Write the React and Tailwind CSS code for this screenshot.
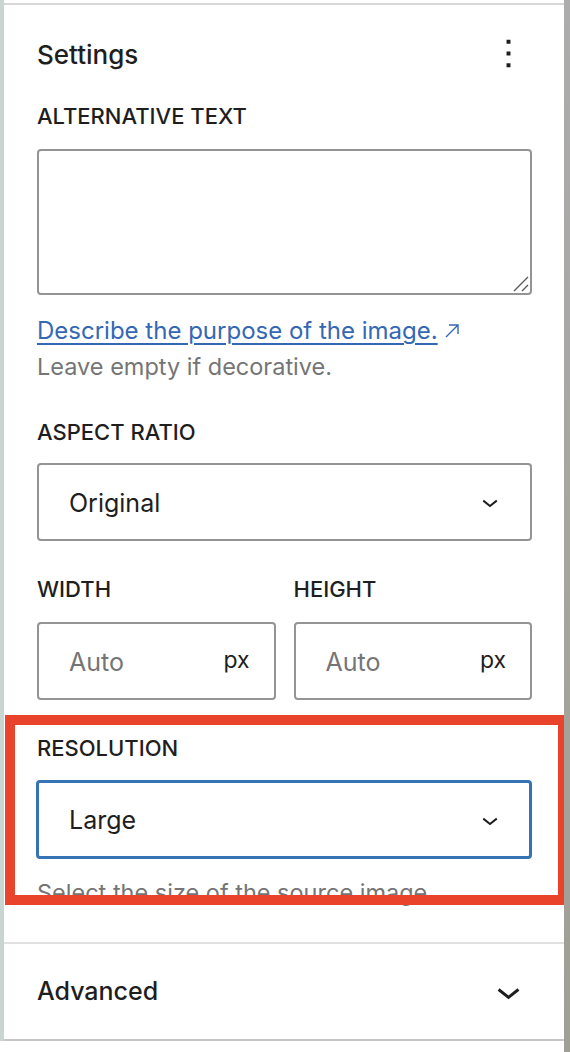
import React from 'react'

// Block settings sidebar: image alt text, aspect ratio, size and resolution controls

const ChevronDown = ({ className }) => (
  <svg viewBox="0 0 24 24" className={className} fill="currentColor">
    <path d="M17.5 11.6L12 16l-5.5-4.4.9-1.2L12 14l4.6-3.6 1 1.2z" />
  </svg>
)

const MoreVertical = ({ className }) => (
  <svg viewBox="0 0 24 24" className={className} fill="currentColor">
    <path d="M13 19h-2v-2h2v2zm0-6h-2v-2h2v2zm0-6h-2V5h2v2z" />
  </svg>
)

const External = ({ className }) => (
  <svg viewBox="0 0 16 16" className={className} fill="none" stroke="currentColor" strokeWidth="1.4">
    <path d="M2 14L14 2M5 2h9v9" />
  </svg>
)

const Label = ({ children }) => (
  <div className="h-[26px] flex items-center text-[22px] leading-none font-medium uppercase text-[#1e1e1e]">
    {children}
  </div>
)

const SelectBox = ({ value, focused }) => (
  <div
    className={
      focused
        ? 'h-[79px] rounded-[4px] border-[3px] border-[#3673b5] flex items-center justify-between pl-[30px] pr-[23px]'
        : 'h-[78px] rounded-[4px] border-2 border-[#949494] flex items-center justify-between pl-[30px] pr-[24px]'
    }
  >
    <span className="text-[25px] text-[#1e1e1e] pt-[3px]">{value}</span>
    <ChevronDown className="w-[32px] h-[32px] text-[#1e1e1e]" />
  </div>
)

const UnitInput = () => (
  <div className="h-[78px] rounded-[4px] border-2 border-[#949494] flex items-center justify-between pl-[30px] pr-[24px]">
    <span className="text-[25px] text-[#757575] pt-[3px]">Auto</span>
    <span className="text-[23px] text-[#1e1e1e] -mt-[2px]">px</span>
  </div>
)

export default function App() {
  return (
    <div className="relative w-[570px] h-[1052px] bg-white flex font-['Inter',sans-serif] text-[#1e1e1e] overflow-hidden">
      {/* editor canvas edge */}
      <div className="w-[4px] h-[1041px] bg-[#c9d6cf] shrink-0" />

      <div className="w-[560px] shrink-0 flex flex-col">
        <div className="h-[3px]" />
        <div className="h-[2px] bg-[#d8d8d8]" />

        {/* panel header */}
        <div className="h-[98px] flex items-center justify-between pl-[33px] pr-[32px]">
          <span className="text-[26px] font-medium">Settings</span>
          <MoreVertical className="w-[47px] h-[47px] text-[#1e1e1e] -mt-[2px]" />
        </div>

        <div className="pl-[33px] pr-[32px] flex flex-col">
          <Label>Alternative text</Label>
          <div className="relative mt-[20px] h-[146px] rounded-[4px] border-2 border-[#949494]">
            <svg viewBox="0 0 16 16" className="absolute right-[1px] bottom-[1px] w-[16px] h-[16px]" stroke="#5a5a5a" strokeWidth="1.4">
              <path d="M1 15L15 1M9 15L15 9" />
            </svg>
          </div>

          <div className="mt-[23px] h-[26px] flex items-center gap-[6px] text-[#3468b4]">
            <span className="text-[24px] underline underline-offset-[4px] decoration-[1.5px]">Describe the purpose of the image.</span>
            <External className="w-[16px] h-[16px]" />
          </div>
          <div className="mt-[10px] h-[26px] flex items-center text-[23.5px] text-[#757575]">
            Leave empty if decorative.
          </div>

          <div className="mt-[39px]">
            <Label>Aspect ratio</Label>
          </div>
          <div className="mt-[18px]">
            <SelectBox value="Original" />
          </div>

          <div className="mt-[35px] grid grid-cols-2 gap-[18px]">
            <Label>Width</Label>
            <Label>Height</Label>
          </div>
          <div className="mt-[20px] grid grid-cols-2 gap-[18px]">
            <UnitInput />
            <UnitInput />
          </div>

          <div className="mt-[35px]">
            <Label>Resolution</Label>
          </div>
          <div className="mt-[19px] -ml-[1px]">
            <SelectBox value="Large" focused />
          </div>
          <div className="mt-[21px] h-[26px] flex items-center text-[23.5px] text-[#757575]">
            Select the size of the source image.
          </div>
          <div className="h-[36px]" />
        </div>

        <div className="h-[2px] bg-[#e0e0e0]" />

        {/* collapsed panel */}
        <div className="h-[95px] flex items-center justify-between pl-[33px] pr-[32px]">
          <span className="text-[25px] font-medium">Advanced</span>
          <ChevronDown className="w-[47px] h-[47px] text-[#1e1e1e]" />
        </div>

        <div className="h-[2px] bg-[#c6c6c6]" />
      </div>

      {/* highlight frame around the resolution control */}
      <div className="absolute left-[5px] top-[715px] w-[563px] h-[190px] border-[10px] border-[#e9432b]" />

      {/* scrollbar track */}
      <div className="relative z-10 w-[6px] h-[1052px] shrink-0 bg-gradient-to-b from-[#acacac] to-[#a19e93]" />
    </div>
  )
}
